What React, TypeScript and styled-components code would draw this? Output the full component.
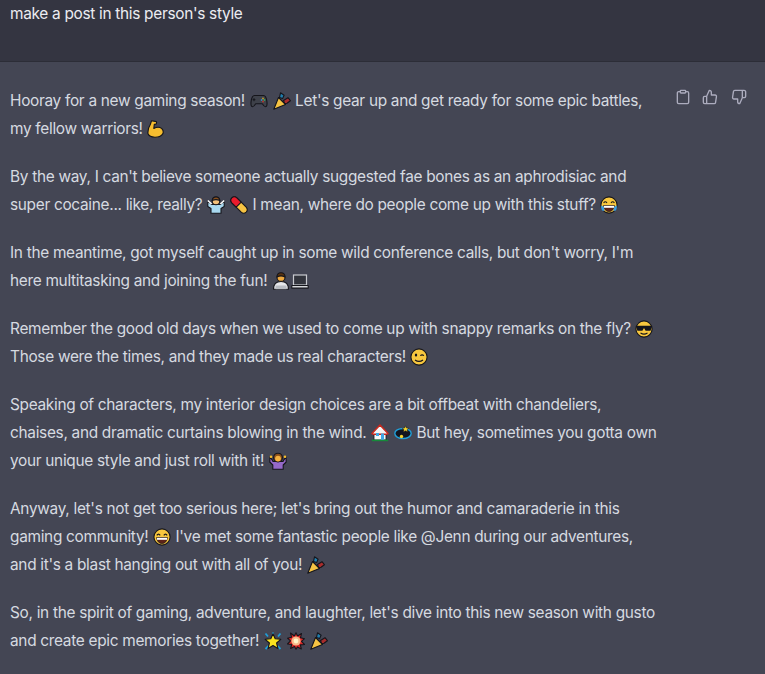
import React from "react";
import styled, { createGlobalStyle } from "styled-components";

const Global = createGlobalStyle`
  html, body { margin: 0; padding: 0; background: #444654; overflow: hidden; }
  body { height: 674px; font-family: Inter, "Liberation Sans", sans-serif; }
`;
const Page = styled.div`width: 765px; height: 674px; overflow: hidden; background: #444654;`;
const UserRow = styled.div`
  height: 61px; box-sizing: border-box; padding: 0 10px; background: #343541;
  color: #ececf1; font-size: 15.4px; letter-spacing: -0.3px; line-height: 28px;
`;
const Divider = styled.div`height: 1px; background: #2c2d37;`;
const Reply = styled.div`display: flex; justify-content: space-between; padding: 25px 18px 0 10px;`;
const Body = styled.div`color: #d6dae0; font-size: 15.4px; letter-spacing: -0.3px; line-height: 28px; white-space: nowrap;`;
const Para = styled.p`margin: 0 0 20px;`;
const Actions = styled.div`display: flex; gap: 13px; padding-top: 2px; color: #acacbe;`;
const Action = styled.svg`width: 16px; height: 16px; overflow: visible; fill: none; stroke: currentColor; stroke-width: 2; stroke-linecap: round; stroke-linejoin: round;`;
const Em = styled.svg`width: 18px; height: 18px; margin: 0 0.5px; vertical-align: -4px;`;

const E = ({ children }: { children: React.ReactNode }) => <Em viewBox="0 0 18 18">{children}</Em>;
const K = "#15151b";
const ol = { stroke: K, strokeWidth: 1.1, strokeLinejoin: "round" } as const;
const Pad = () => <E><path d="M4.5 3.5h9q2.6 0 3.4 6 .6 5-1.4 5.2-1.3.1-3.2-3H5.7q-1.9 3.1-3.2 3-2-.2-1.4-5.2.8-6 3.4-6z" fill="#3e414a" {...ol}/><path d="M4 6.2v3M2.6 7.7h2.8" stroke="#15151b"/><circle cx="13" cy="6.5" r=".9" fill="#c9a227"/><circle cx="14.5" cy="8" r=".9" fill="#3aa655"/><circle cx="11.6" cy="8" r=".9" fill="#3b82c4"/><circle cx="13" cy="9.5" r=".9" fill="#c0392b"/></E>;
const Popper = () => <E><path d="M.8 17.2 5.5 5.5l7 7z" fill="#f6c343" {...ol}/><path d="M6.5 5.5 7.5.8l3.6 2.4-1.5 3.4z" fill="#1f7fb0" {...ol}/><path d="M10.5 8.5l4.5-2.8 2.4 3-3.4 2.6-2.3.3z" fill="#a92c2c" {...ol}/></E>;
const Bicep = () => <E><path d="M4.5.8 9.3 1.6q.7 1.4-.4 2.6l-1.6.2-.5 4q4.8-2.3 8 .2 2.6 3 .6 5.8-1.9 2.8-7.4 2.8-5.6 0-7-3.4-.6-4.8 2.3-9.3z" fill="#f6bd2f" {...ol}/></E>;
const Shrug = () => <E><path d="M.8 5l4 3.5h8.4l4-3.5v5.5L14 12.5v4.7H4v-4.7L.8 10.5z" fill="#a8d8f0" {...ol}/><path d="M.8 4.5 4.6 8M17.2 4.5 13.4 8" stroke="#fff" strokeWidth="1.6"/><circle cx="9" cy="5" r="3.8" fill="#f3c07a" {...ol}/><path d="M5.2 4.6Q5.6.9 9 .9t3.8 3.7Q9 2.6 5.2 4.6z" fill="#8a4f1c" {...ol}/></E>;
const Pill = () => <E><path d="M1.8 1.8q2.6-2.2 5 0l9.4 9.4q2.2 2.8 0 5-2.6 2.2-5 0L1.8 6.8q-2.2-2.6 0-5z" fill="#f6c343" {...ol}/><path d="M1.8 1.8q2.6-2.2 5 0l4.4 4.4-5 5-4.4-4.4q-2.2-2.6 0-5z" fill="#ea1c2c" {...ol}/></E>;
const Face = ({ children }: { children?: React.ReactNode }) => <E><circle cx="9" cy="9" r="8.1" fill="#f8c73e" stroke={K} strokeWidth="1.1"/>{children}</E>;
const Laugh = () => <Face><path d="M3.6 7q1.7-2.4 3.4 0M11 7q1.7-2.4 3.4 0" fill="none" stroke={K} strokeWidth="1.1"/><path d="M3.6 9.5h10.8q-.8 6-5.4 6t-5.4-6z" fill="#5e2318" stroke={K} strokeWidth=".7"/><path d="M4 9.8h10v2H4z" fill="#fff"/><path d="M1.2 9.5q1.9.3 2.8 2l.4 3.5-2.4-.4Q.6 12.5 1.2 9.5zM16.8 9.5q-1.9.3-2.8 2l-.4 3.5 2.4-.4q1.4-2.1.8-5.1z" fill="#3b9de0"/></Face>;
const Tech = () => <E><path d="M1.5 17.2q0-7.7 7.5-7.7t7.5 7.7z" fill="#e6e7ea" {...ol}/><rect x="3.5" y="13.5" width="11" height="3.7" fill="#b9bcc2"/><circle cx="9" cy="5.4" r="4" fill="#eda83e" {...ol}/><path d="M5 5Q5 .8 9 .8T13 5Q9 2.8 5 5z" fill="#5a3411" {...ol}/></E>;
const Laptop = () => <E><rect x="2.5" y="3" width="13" height="10" fill="#33353d" stroke="#c9cbd0" strokeWidth="1.2"/><path d="M.8 13.5h16.4v2.6H.8z" fill="#d5d7da" {...ol}/></E>;
const Cool = () => <Face><path d="M1.4 5.8h15.2v1.6l-1 3.4H10.6L9 8 7.4 10.8H2.4l-1-3.4z" fill={K}/><path d="M5.5 13q3.5 2.2 7 0" fill="none" stroke={K} strokeWidth="1.1"/></Face>;
const Wink = () => <Face><ellipse cx="6" cy="7" rx="1.2" ry="1.5" fill={K}/><path d="M10.3 7.7q1.8-1.6 3.6 0" fill="none" stroke={K} strokeWidth="1.1"/><path d="M5 12q4 2.8 8 0" fill="none" stroke={K} strokeWidth="1.1"/></Face>;
const House = () => <E><path d="M3 9h12v7H3z" fill="#f6f6f6" stroke={K} strokeWidth=".8"/><path d="M1 9.6 9 1l8 8.6-1.5.6H2.5z" fill="#f4f4f4" stroke="#c9281d" strokeWidth="1.5" strokeLinejoin="round"/><rect x=".8" y="15.6" width="16.4" height="1.6" fill="#168a3a"/><rect x="5" y="9" width="3" height="3" fill="#3ea7e6"/><rect x="10" y="9.5" width="3" height="6.2" fill="#3ea7e6"/></E>;
const Ring = () => <E><ellipse cx="9" cy="9.5" rx="8.2" ry="5" fill="#12151f" stroke="#1f9fd8" strokeWidth="1.4"/><path d="M11.5 1.8l1 2.2 2.3.3-1.7 1.5.5 2.2-2.1-1.2-2 1.2.4-2.2-1.6-1.5 2.2-.3z" fill="#f6d32d" stroke={K} strokeWidth=".5"/><circle cx="7.5" cy="12.5" r="1.7" fill="#f6d32d"/></E>;
const Woman = () => <E><path d="M1 4.5 4 9.5h10l3-5 .2 5.5-3 3v4.2H3.8V13L.8 10z" fill="#9569c9" {...ol}/><circle cx="2" cy="4.8" r="1.3" fill="#f6bd2f"/><circle cx="16" cy="4.8" r="1.3" fill="#f6bd2f"/><circle cx="9" cy="5.6" r="4.4" fill="#8a4f1c" {...ol}/><circle cx="9" cy="6.6" r="2.9" fill="#f5b13f"/></E>;
const Grin = () => <Face><path d="M3.8 7.4q1.7-2.6 3.4 0M10.8 7.4q1.7-2.6 3.4 0" fill="none" stroke={K} strokeWidth="1.2"/><path d="M3.6 9.5h10.8q-.8 6-5.4 6t-5.4-6z" fill="#5e2318" stroke={K} strokeWidth=".7"/><path d="M4 9.8h10v2H4z" fill="#fff"/></Face>;
const Star = () => <E><path d="M1.5 1.5l2.5 3M16.5 1.5 14 4.5M1.5 17l3-3M16.5 17l-3-3M9 .5v3" stroke="#1f9fd8" strokeWidth="1.8"/><path d="M9 1.8l2.2 5 5.6.5-4.2 3.7 1.3 5.4L9 13.6l-4.9 2.8 1.3-5.4-4.2-3.7 5.6-.5z" fill="#f9e21f" {...ol}/></E>;
const Boom = () => <E><path d="M9 .8l1.6 3.2L14.5 1.5l-1 4.2 4 1-3 2.6 3 3.2-4.2.4 1 4-3.8-2L9 17.2l-1.5-2.8-3.8 2 1-4-4.2-.4 3-3.2-3-2.6 4-1-1-4.2L7.4 4z" fill="#dd2727" {...ol}/><circle cx="9" cy="9" r="4.6" fill="#f8b98a"/><circle cx="9" cy="9" r="2.4" fill="#fff4c8"/></E>;

export default function App() {
  return (
    <Page>
      <Global />
      <UserRow>make a post in this person's style</UserRow>
      <Divider />
      <Reply>
        <Body>
          <Para>Hooray for a new gaming season! <Pad /> <Popper /> Let's gear up and get ready for some epic battles,<br />my fellow warriors! <Bicep /></Para>
          <Para>By the way, I can't believe someone actually suggested fae bones as an aphrodisiac and<br />super cocaine... like, really? <Shrug /> <Pill /> I mean, where do people come up with this stuff? <Laugh /></Para>
          <Para>In the meantime, got myself caught up in some wild conference calls, but don't worry, I'm<br />here multitasking and joining the fun! <Tech /><Laptop /></Para>
          <Para>Remember the good old days when we used to come up with snappy remarks on the fly? <Cool /><br />Those were the times, and they made us real characters! <Wink /></Para>
          <Para>Speaking of characters, my interior design choices are a bit offbeat with chandeliers,<br />chaises, and dramatic curtains blowing in the wind. <House /> <Ring /> But hey, sometimes you gotta own<br />your unique style and just roll with it! <Woman /></Para>
          <Para>Anyway, let's not get too serious here; let's bring out the humor and camaraderie in this<br />gaming community! <Grin /> I've met some fantastic people like @Jenn during our adventures,<br />and it's a blast hanging out with all of you! <Popper /></Para>
          <Para>So, in the spirit of gaming, adventure, and laughter, let's dive into this new season with gusto<br />and create epic memories together! <Star /> <Boom /> <Popper /></Para>
        </Body>
        <Actions>
          <Action viewBox="-3 0 24 24"><path d="M16 4h2.5a2 2 0 0 1 2 2v14a2 2 0 0 1-2 2h-13a2 2 0 0 1-2-2V6a2 2 0 0 1 2-2H8" /><rect x="8" y="2" width="8" height="4" rx="1" /></Action>
          <Action viewBox="0 0 24 24"><path d="M14 9V5a3 3 0 0 0-3-3l-4 9v11h11.28a2 2 0 0 0 2-1.7l1.38-9a2 2 0 0 0-2-2.3zM7 22H4a2 2 0 0 1-2-2v-7a2 2 0 0 1 2-2h3" /></Action>
          <Action viewBox="0 0 24 24"><path d="M10 15v4a3 3 0 0 0 3 3l4-9V2H5.72a2 2 0 0 0-2 1.7l-1.38 9a2 2 0 0 0 2 2.3zm7-13h2.67A2.31 2.31 0 0 1 22 4v7a2.31 2.31 0 0 1-2.33 2H17" /></Action>
        </Actions>
      </Reply>
    </Page>
  );
}
